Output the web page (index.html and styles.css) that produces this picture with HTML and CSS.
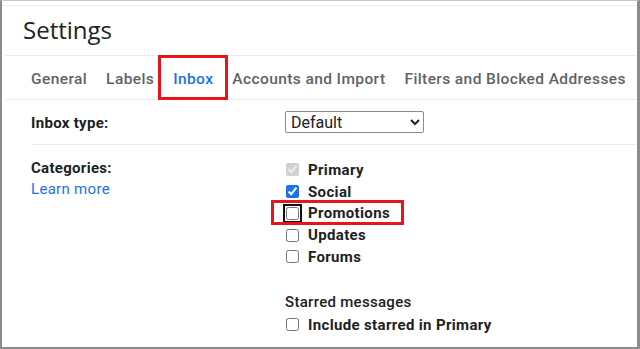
FILE: index.html
```html
<!DOCTYPE html>
<html>
<head>
    <meta charset="UTF-8">
    <title>Settings</title>
    <link rel="stylesheet" href="styles.css">
</head>
<body>
    <div class="frame">
        <div class="top-strip"></div>
        <div class="settings-header">Settings</div>

        <div class="tabs">
            <span class="tab">General</span>
            <span class="tab">Labels</span>
            <span class="tab active">Inbox</span>
            <span class="tab">Accounts and Import</span>
            <span class="tab">Filters and Blocked Addresses</span>
        </div>

        <div class="setting-row inbox-type">
            <div class="setting-label">Inbox type:</div>
            <div class="setting-value">
                <select class="type-select">
                    <option>Default</option>
                </select>
            </div>
        </div>

        <div class="setting-row categories">
            <div class="setting-label">
                Categories:
                <a class="learn-more">Learn more</a>
            </div>
            <div class="setting-value">
                <label class="check-row"><input type="checkbox" checked disabled> Primary</label>
                <label class="check-row"><input type="checkbox" checked> Social</label>
                <label class="check-row marked"><input type="checkbox" class="focused"> Promotions</label>
                <label class="check-row"><input type="checkbox"> Updates</label>
                <label class="check-row"><input type="checkbox"> Forums</label>

                <div class="sub-title">Starred messages</div>
                <label class="check-row"><input type="checkbox"> Include starred in Primary</label>
            </div>
        </div>
    </div>
</body>
</html>
```

FILE: styles.css
```css
* {
    box-sizing: border-box;
    margin: 0;
    padding: 0;
}

body {
    font-family: Roboto, "Liberation Sans", Arial, sans-serif;
    color: #202124;
    background: #fff;
}

.frame {
    height: 349px;
    border: 2px solid #8c8c8c;
    border-top: 1px solid #c8c8c8;
    border-right-width: 3px;
    overflow: hidden;
}

.top-strip {
    height: 5px;
    border-bottom: 1px dotted #e2e2e2;
}

.settings-header {
    height: 50px;
    padding: 7px 0 0 18px;
    font-family: "Open Sans", sans-serif;
    font-size: 24px;
    color: #202124;
    border-bottom: 1px solid #ececec;
    margin-left: 3px;
}

.tabs {
    display: flex;
    align-items: stretch;
    height: 44px;
    padding-left: 26px;
    border-bottom: 1px solid #ececec;
    margin-left: 3px;
}

.tab {
    display: flex;
    align-items: center;
    flex-shrink: 0;
    white-space: nowrap;
    padding-top: 3px;
    margin-right: 19px;
    font-size: 15.5px;
    font-weight: 500;
    letter-spacing: 0.4px;
    color: #5f6368;
}

.tab.active {
    color: #1a73e8;
    position: relative;
}

/* red highlight drawn over the screenshot */
.tab.active::after {
    content: "";
    position: absolute;
    left: -15px;
    right: -15px;
    top: -1px;
    bottom: -1px;
    border: 3px solid #e8141c;
}

.setting-row {
    display: flex;
    margin-left: 29px;
}

.setting-label {
    width: 254px;
    font-size: 15px;
    font-weight: 700;
    letter-spacing: 0.3px;
}

.inbox-type {
    height: 45px;
    padding-top: 11px;
    border-bottom: 1px solid #ececec;
}

.inbox-type .setting-label {
    padding-top: 3px;
}

.inbox-type .setting-value {
    padding-top: 0;
}

.type-select {
    width: 139px;
    height: 22px;
    font-family: Roboto, sans-serif;
    font-size: 16px;
    color: #202124;
    border: 1px solid #8a8a8a;
    border-radius: 2px;
    background: #fff;
    padding-left: 1px;
}

.categories {
    padding-top: 14px;
}

.learn-more {
    display: block;
    margin-top: 3px;
    font-weight: 400;
    color: #1a73e8;
}

.setting-value {
    display: flex;
    flex-direction: column;
    align-items: flex-start;
    padding-top: 0;
}

.check-row {
    display: flex;
    align-items: center;
    gap: 9px;
    height: 21.75px;
    font-size: 15px;
    font-weight: 700;
    letter-spacing: 0.35px;
    position: relative;
}

.check-row input {
    width: 13px;
    height: 13px;
    margin-left: 1px;
    accent-color: #1a73e8;
}

.check-row input.focused {
    outline: 2px solid #111;
    outline-offset: 1px;
    border-radius: 3px;
}

.check-row.marked::after {
    content: "";
    position: absolute;
    left: -14px;
    right: -14px;
    top: -3px;
    bottom: -1px;
    border: 3px solid #e8141c;
}

.sub-title {
    margin-top: 25px;
    margin-bottom: 3px;
    font-size: 15px;
    font-weight: 500;
    letter-spacing: 0.3px;
}
```
